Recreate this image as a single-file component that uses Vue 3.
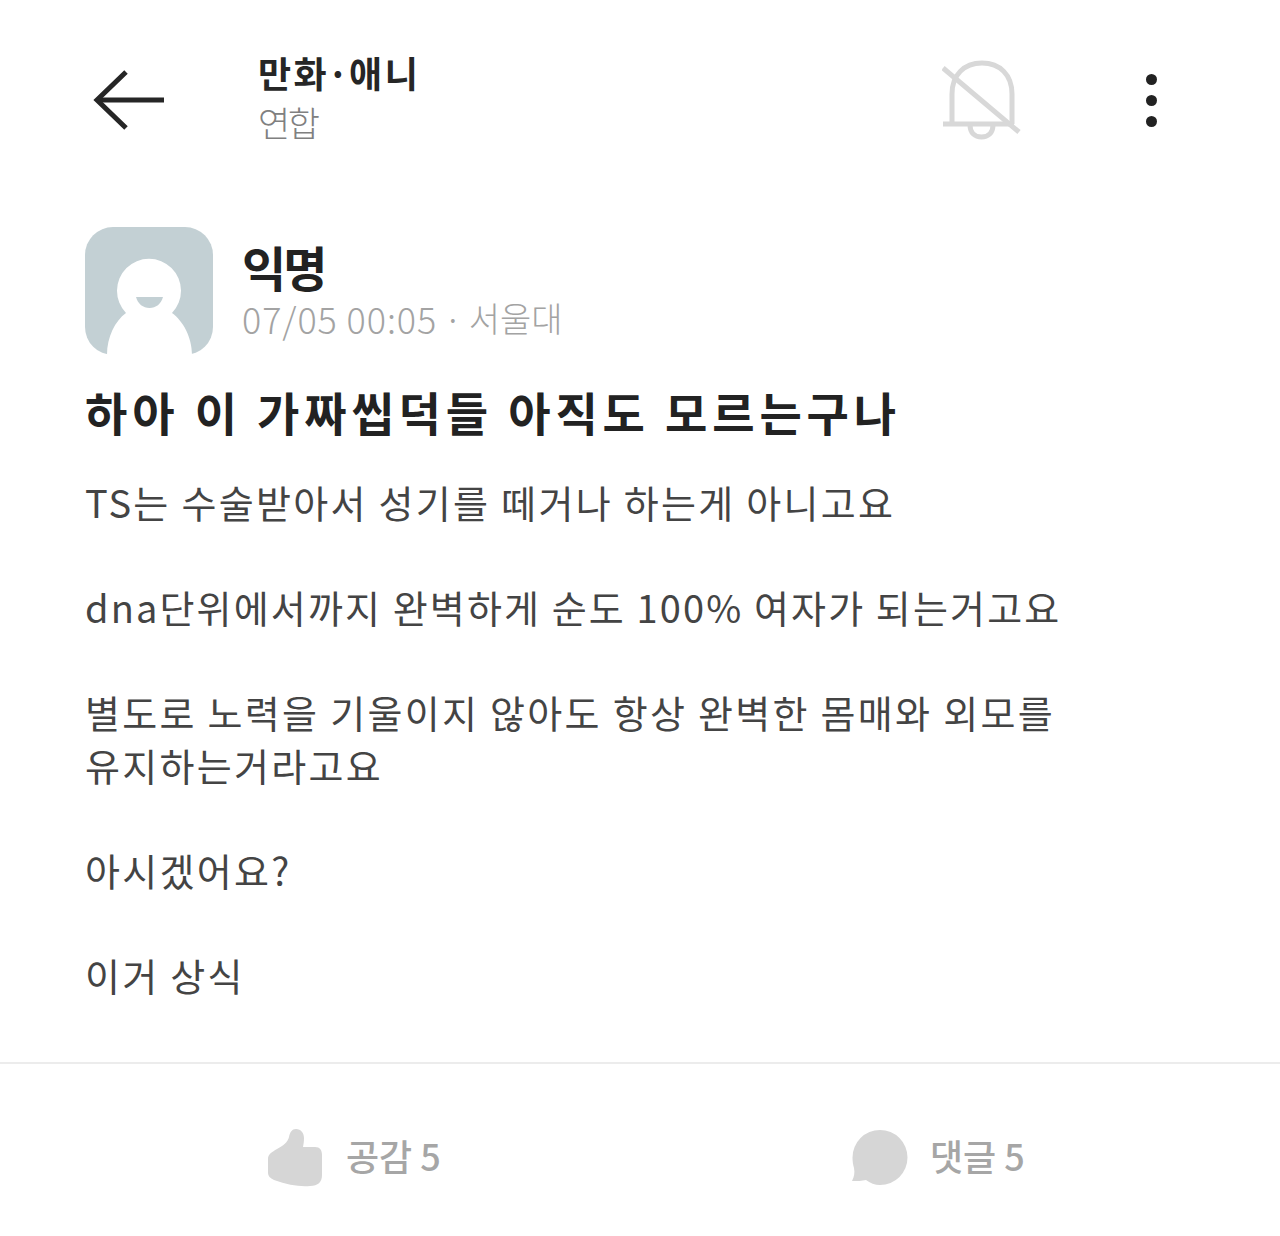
<script setup>
const lines = [
  'TS는 수술받아서 성기를 떼거나 하는게 아니고요',
  '',
  'dna단위에서까지 완벽하게 순도 100% 여자가 되는거고요',
  '',
  '별도로 노력을 기울이지 않아도 항상 완벽한 몸매와 외모를',
  '유지하는거라고요',
  '',
  '아시겠어요?',
  '',
  '이거 상식'
]
</script>

<template>
  <div class="page">
    <header class="top">
      <svg class="back" width="72" height="60" viewBox="0 0 72 60" fill="none" stroke="#262626" stroke-width="5">
        <path d="M71 30H4" />
        <path d="M33 2L4 30l29 28" />
      </svg>
      <div class="board">
        <div class="board-name">만화<span class="mid">·</span>애니</div>
        <div class="board-sub">연합</div>
      </div>
      <svg class="bell" width="80" height="82" viewBox="0 0 80 82" fill="none" stroke="#d8d8d8" stroke-width="5">
        <path d="M10 65V35C10 16 22 4 40 4s30 12 30 31v30" />
        <path d="M1 65h71" />
        <path d="M28 66c0 8 5 12 11.5 12S51 74 51 66" />
        <path d="M1 9l76 64" />
      </svg>
      <div class="dots"><i></i><i></i><i></i></div>
    </header>

    <section class="author">
      <svg class="avatar" width="128" height="128" viewBox="0 0 128 128">
        <path d="M28 0h72a28 28 0 0 1 28 28v72a28 28 0 0 1-28 28H28a28 28 0 0 1-28-28V28A28 28 0 0 1 28 0z" fill="#c3d0d4" />
        <path d="M22 128C22 110 30 94 41 86A32 32 0 1 1 87 86C98 94 107 110 107 128z" fill="#fff" />
        <path d="M51 70h27c-2 7-7 11-13.500 11S53 77 51 70z" fill="#c3d0d4" />
      </svg>
      <div class="meta">
        <div class="nick">익명</div>
        <div class="info"><span class="date">07/05 00:05</span><span>·</span><span class="uni">서울대</span></div>
      </div>
    </section>

    <h1 class="title">하아 이 가짜씹덕들 아직도 모르는구나</h1>

    <div class="body">
      <div v-for="(l, i) in lines" :key="i" class="line" :class="{ tight: i === 2 }">{{ l || '\u00a0' }}</div>
    </div>

    <footer class="actions">
      <div class="action">
        <svg width="54" height="58" viewBox="0 0 54 58" fill="#d6d6d6">
          <path d="M0 30C0 25 4 23 9 20C15 17 20 13 21 8C22 3 24 0 28 0C33 0 36 4 36 9C36 13 35.500 15 35 18L47 18C52 18 54 21 54 26L54 46C54 53 50 57 42 57C32 58 20 56 6 51C2 49 0 47 0 44Z" />
        </svg>
        <span class="label">공감 5</span>
      </div>
      <div class="action comment">
        <svg width="56" height="58" viewBox="0 0 56 58" fill="#d6d6d6">
          <path d="M28 1a27.500 27.500 0 1 1 0 55c-5 0-10-2-14-5-4 1-9 1-14 1 2-4 3-8 2-13C1 36 .5 32 .5 28.500A27.500 27.500 0 0 1 28 1z" />
        </svg>
        <span class="label">댓글 5</span>
      </div>
    </footer>
  </div>
</template>

<style scoped>
.page {
  position: relative;
  width: 1280px;
  height: 1236px;
  background: #fff;
  font-family: "Noto Sans CJK KR", "Noto Sans", sans-serif;
  color: #222;
  overflow: hidden;
  box-sizing: border-box;
}
.top {
  display: flex;
  align-items: center;
  height: 100px;
  margin-top: 50px;
  padding: 0 123px 0 93px;
}
.back { flex: none; }
.board { margin: -6px 0 0 93px; display: flex; flex-direction: column; }
.board-name { font-size: 36px; line-height: 50px; font-weight: 700; color: #262626; letter-spacing: 2.5px; }
.mid { margin: 0 -2px; }
.board-sub { font-size: 35px; line-height: 50px; color: #808080; font-weight: 300; letter-spacing: -2.5px; }
.bell { flex: none; margin-left: auto; }
.dots { display: flex; flex-direction: column; gap: 10px; margin-left: 124px; }
.dots i { width: 11px; height: 11px; border-radius: 50%; background: #222; display: block; }
.author {
  display: flex;
  align-items: flex-start;
  margin-top: 77px;
  padding-left: 85px;
  gap: 29px;
}
.nick { font-size: 48px; line-height: 60px; font-weight: 700; color: #222; margin-top: 9px; letter-spacing: -3px; }
.info {
  display: flex;
  align-items: center;
  gap: 6px;
  font-size: 36px;
  line-height: 44px;
  color: #a3a3a3;
  font-weight: 300;
}
.date { letter-spacing: .9px; }
.uni { font-size: 34px; }
.title {
  margin: 23px 0 0;
  padding-left: 85px;
  font-size: 46px;
  line-height: 66px;
  font-weight: 700;
  color: #222;
  letter-spacing: 4.85px;
}
.body {
  margin-top: 32px;
  padding-left: 85px;
  font-size: 38px;
  line-height: 52.5px;
  font-weight: 400;
  color: #444;
  letter-spacing: 2.3px;
}
.line { white-space: nowrap; }
.tight { letter-spacing: 2.13px; }
.actions {
  position: absolute;
  top: 1062px;
  left: 0;
  width: 1280px;
  height: 174px;
  border-top: 2px solid #ececec;
  display: flex;
  gap: 411px;
  padding: 16px 0 0 268px;
  box-sizing: border-box;
}
.action {
  display: flex;
  align-items: center;
  gap: 24px;
  font-size: 36px;
  color: #a6a6a6;
  font-weight: 500;
}
.label { margin-bottom: 6px; }
.comment { gap: 22px; }
</style>
